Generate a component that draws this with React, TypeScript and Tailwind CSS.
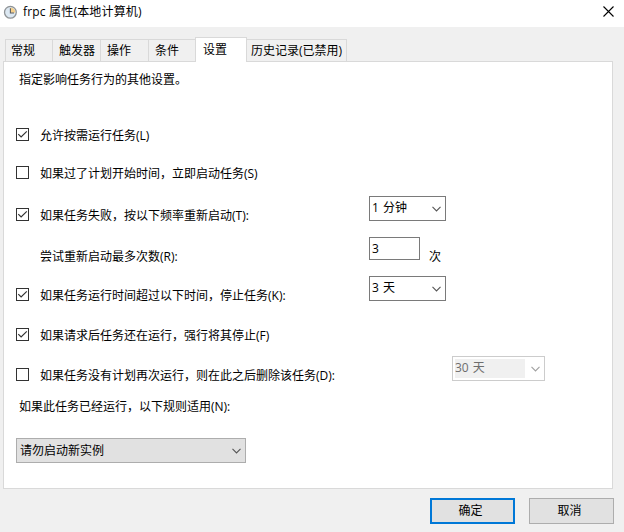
import { useState } from 'react';
import type { ReactNode } from 'react';
import clsx from 'clsx';

const Chevron = ({ className }: { className?: string }) => (
  <svg className={clsx('shrink-0', className)} width="9" height="6" viewBox="0 0 9 6" fill="none" stroke="currentColor" strokeWidth="1.1">
    <path d="M0.5 0.9 L4.5 4.9 L8.5 0.9" />
  </svg>
);

const ClockIcon = () => (
  <svg width="14" height="14" viewBox="0 0 14 14" fill="none">
    <circle cx="7.4" cy="7.3" r="5.9" fill="#dce8f2" stroke="#8f9396" strokeWidth="1.3" />
    <path d="M7.4 7.8 V2.4 A5 5 0 0 1 12.3 7.8 Z" fill="#f5cf8a" />
    <path d="M7.4 3.2 V8 H11" stroke="#5c5f63" strokeWidth="1.1" />
  </svg>
);

const CheckBox = ({ checked, onChange }: { checked: boolean; onChange: () => void }) => (
  <button
    role="checkbox"
    aria-checked={checked}
    onClick={onChange}
    className="mt-3 mr-[11px] flex h-[13px] w-[13px] shrink-0 items-center justify-center border border-[#333333] bg-white"
  >
    {checked && (
      <svg width="11" height="11" viewBox="0 0 11 11" fill="none" stroke="#333333" strokeWidth="1.2">
        <path d="M1.3 5.2 L4.1 8 L9.8 2.3" />
      </svg>
    )}
  </button>
);

const Combo = ({ value }: { value: string }) => (
  <button className="flex h-[25px] w-[77px] items-center justify-between border border-[#7a7a7a] bg-white pr-1 pb-px pl-0.5">
    <span className="[word-spacing:1px]">{value}</span>
    <Chevron className="mt-0.5 text-[#555555]" />
  </button>
);

type RowProps = {
  label: string;
  height: string;
  checked?: boolean;
  onChange?: () => void;
  children?: ReactNode;
};

const Row = ({ label, height, checked, onChange, children }: RowProps) => (
  <div className={clsx('flex items-start', height)}>
    {onChange ? <CheckBox checked={!!checked} onChange={onChange} /> : <span className="w-6 shrink-0" />}
    <div className="flex w-[329px] shrink-0 pt-[10px]">{label}</div>
    {children}
  </div>
);

const tabs = [
  { label: '常规', width: 'w-[47px]', padding: 'pl-[5px]' },
  { label: '触发器', width: 'w-12', padding: 'pl-1.5' },
  { label: '操作', width: 'w-12', padding: 'pl-1.5' },
  { label: '条件', width: 'w-[47px]', padding: 'pl-1.5' },
  { label: '设置', width: 'w-[52px]', padding: 'pl-[7px]' },
  { label: '历史记录(已禁用)', width: 'w-[100px]', padding: 'pl-1' },
];

export default function App() {
  const [active, setActive] = useState(4);
  const [options, setOptions] = useState([true, false, true, true, true, false]);

  const toggle = (i: number) => setOptions(options.map((v, n) => (n === i ? !v : v)));

  return (
    <div className="flex h-[532px] w-[624px] flex-col overflow-hidden bg-[#f0f0f0] font-['Open_Sans','Noto_Sans_CJK_SC',sans-serif] text-[12px] leading-5 whitespace-nowrap text-black">
      {/* Title bar */}
      <div className="flex h-[27px] shrink-0 items-start bg-white pt-[2px] pr-[10px] pl-[3px]">
        <div className="mt-[3px]">
          <ClockIcon />
        </div>
        <span className="ml-[6px] flex-1 tracking-[0.18px]">frpc 属性(本地计算机)</span>
        <svg className="mt-1" width="11" height="11" viewBox="0 0 11 11" stroke="#000" strokeWidth="1.1">
          <path d="M0.5 0.5 L10.5 10.5 M10.5 0.5 L0.5 10.5" />
        </svg>
      </div>

      {/* Tabs */}
      <div className="z-10 flex h-[35px] shrink-0 items-end pl-[5px]">
        {tabs.map((tab, i) => (
          <button
            key={tab.label}
            onClick={() => setActive(i)}
            className={clsx(
              'shrink-0 border-t border-[#d9d9d9] text-left',
              tab.width,
              tab.padding,
              i === active ? 'h-[25px] border-x bg-white' : 'mb-px h-[22px]',
              i !== active && i !== active + 1 && 'border-l',
              i === tabs.length - 1 && 'border-r',
            )}
          >
            {tab.label}
          </button>
        ))}
      </div>

      {/* Settings page */}
      <div className="-mt-px ml-[3px] h-[428px] w-[610px] shrink-0 border border-[#d9d9d9] bg-white pl-3">
        <p className="h-[54px] pt-2 pl-[3px]">指定影响任务行为的其他设置。</p>
        <Row height="h-[38px]" label="允许按需运行任务(L)" checked={options[0]} onChange={() => toggle(0)} />
        <Row height="h-[42px]" label="如果过了计划开始时间，立即启动任务(S)" checked={options[1]} onChange={() => toggle(1)} />
        <Row height="h-[41px]" label="如果任务失败，按以下频率重新启动(T):" checked={options[2]} onChange={() => toggle(2)}>
          <Combo value="1 分钟" />
        </Row>
        <Row height="h-[39px]" label="尝试重新启动最多次数(R):">
          <input className="h-[23px] w-[51px] border border-[#7a7a7a] bg-white px-0.5 outline-none" defaultValue="3" />
          <span className="mt-[10px] ml-[9px]">次</span>
        </Row>
        <Row height="h-10" label="如果任务运行时间超过以下时间，停止任务(K):" checked={options[3]} onChange={() => toggle(3)}>
          <Combo value="3 天" />
        </Row>
        <Row height="h-10" label="如果请求后任务还在运行，强行将其停止(F)" checked={options[4]} onChange={() => toggle(4)} />
        <Row height="h-10" label="如果任务没有计划再次运行，则在此之后删除该任务(D):" checked={options[5]} onChange={() => toggle(5)}>
          <div className="ml-[83px] flex h-[25px] w-[93px] items-center justify-between border border-[#cccccc] pr-1 pl-0.5 text-[#6d6d6d]">
            <span className="h-[19px] w-[70px] bg-[#f0f0f0] leading-[17px] [word-spacing:1px]">30 天</span>
            <Chevron className="text-[#a0a0a0]" />
          </div>
        </Row>
        <p className="h-[42px] pt-px pl-[3px]">如果此任务已经运行，以下规则适用(N):</p>
        <button className="flex h-[25px] w-[230px] items-center justify-between border border-[#adadad] bg-[#e1e1e1] pr-1 pl-[3px]">
          <span>请勿启动新实例</span>
          <Chevron className="text-[#555555]" />
        </button>
      </div>

      {/* Buttons */}
      <div className="flex justify-end gap-[14px] pt-[9px] pr-[10px]">
        <button className="h-[26px] w-[85px] border-2 border-[#0078d7] bg-[#e1e1e1] pr-1">确定</button>
        <button className="h-[26px] w-[85px] border border-[#adadad] bg-[#e1e1e1] pr-1">取消</button>
      </div>
    </div>
  );
}
